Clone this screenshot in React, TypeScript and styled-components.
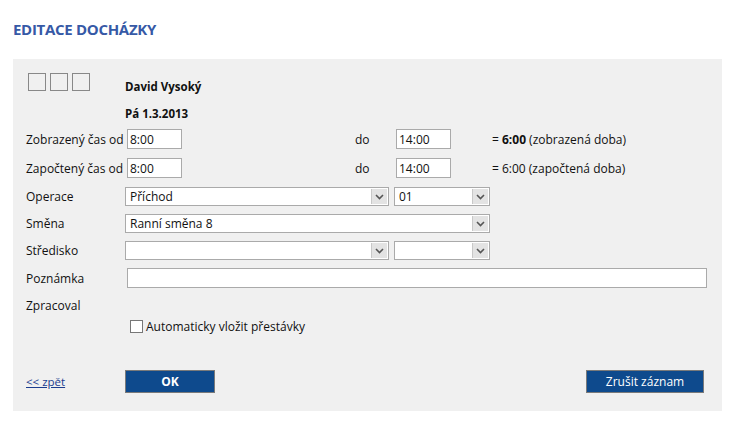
import { createGlobalStyle, styled } from "styled-components";

const GlobalStyle = createGlobalStyle`
  html, body {
    margin: 0;
    padding: 0;
    background: #fff;
  }
  body {
    font-family: "Open Sans", "Noto Sans", Arial, sans-serif;
    font-size: 12px;
    color: #111;
  }
`;

const Page = styled.div`
  padding: 0 15px 0 13px;
`;

const Title = styled.h1`
  margin: 0;
  padding-top: 19px;
  height: 40px;
  font-size: 15px;
  font-weight: 700;
  color: #3659a6;
  letter-spacing: -0.3px;
`;

const Panel = styled.div`
  width: 709px;
  box-sizing: border-box;
  background: #f0f0f0;
  padding: 14px 0 18px 13px;
  display: flex;
  flex-flow: column nowrap;
`;

const Header = styled.div`
  display: flex;
  flex-flow: row nowrap;
`;

const Boxes = styled.div`
  display: flex;
  gap: 4px;
  width: 97px;
  padding-left: 2px;
`;

const Box = styled.div`
  width: 16px;
  height: 16px;
  border: 1px solid #888;
  background: #f0f0f0;
`;

const Person = styled.div`
  display: flex;
  flex-flow: column nowrap;
  gap: 12px;
  padding-top: 6px;
  font-weight: 700;
  font-size: 11.5px;
  line-height: 15px;
`;

const Row = styled.div<{ $top: number; $height?: number }>`
  display: flex;
  flex-flow: row nowrap;
  align-items: center;
  margin-top: ${({ $top }) => $top}px;
  height: ${({ $height }) => $height ?? 20}px;
`;

const Label = styled.div`
  width: 99px;
  flex: none;
  white-space: nowrap;
`;

const TextInput = styled.input<{ $width: number; $flush?: boolean }>`
  box-sizing: border-box;
  width: ${({ $width }) => $width}px;
  height: 20px;
  margin: 0 0 0 ${({ $flush }) => ($flush ? 0 : 2)}px;
  padding: 0 2px;
  border: 1px solid #aaa;
  background: #fff;
  font: inherit;
  color: #111;
  outline: none;
`;

const Between = styled.div<{ $left: number; $width: number }>`
  margin-left: ${({ $left }) => $left}px;
  width: ${({ $width }) => $width}px;
  flex: none;
`;

const Result = styled.div`
  margin-left: 41px;
  white-space: nowrap;

  b {
    font-weight: 700;
  }
`;

const Select = styled.div<{ $width: number }>`
  box-sizing: border-box;
  width: ${({ $width }) => $width}px;
  height: 19px;
  border: 1px solid #aaa;
  background: #fff;
  display: flex;
  flex-flow: row nowrap;
  align-items: stretch;
  flex: none;

  & + & {
    margin-left: 5px;
  }
`;

const SelectValue = styled.div`
  flex: 1;
  padding-left: 4px;
  line-height: 17px;
  white-space: nowrap;
  overflow: hidden;
`;

const Arrow = styled.div`
  width: 15px;
  margin: 1px;
  background: #e3e3e3;
  border-left: 1px solid #c8c8c8;
  display: flex;
  align-items: center;
  justify-content: center;
`;

const CheckRow = styled.label`
  display: flex;
  align-items: center;
  gap: 3px;
  margin-left: 104px;
`;

const CheckBox = styled.span`
  box-sizing: border-box;
  width: 13px;
  height: 13px;
  border: 1px solid #777;
  background: #fff;
`;

const Footer = styled.div`
  display: flex;
  flex-flow: row nowrap;
  align-items: center;
  margin-top: 35px;
  height: 23px;
`;

const BackLink = styled.a`
  width: 99px;
  color: #1b3d8f;
  text-decoration: underline;
  font-size: 11.5px;
`;

const Button = styled.button<{ $width: number }>`
  box-sizing: border-box;
  width: ${({ $width }) => $width}px;
  height: 23px;
  border: 1px solid #7a7a7a;
  background: #0e4a8d;
  color: #fff;
  font: inherit;
  font-weight: 700;
  padding: 0;
`;

const CancelButton = styled(Button)`
  margin-left: auto;
  margin-right: 18px;
  font-weight: 400;
`;

const Chevron = () => (
  <svg width="9" height="6" viewBox="0 0 9 6">
    <path d="M1 1 L4.5 4.5 L8 1" fill="none" stroke="#555" strokeWidth="1.6" />
  </svg>
);

const Dropdown = ({ width, value }: { width: number; value?: string }) => (
  <Select $width={width}>
    <SelectValue>{value}</SelectValue>
    <Arrow>
      <Chevron />
    </Arrow>
  </Select>
);

export default function App() {
  return (
    <Page>
      <GlobalStyle />
      <Title>EDITACE DOCHÁZKY</Title>
      <Panel>
        <Header>
          <Boxes>
            <Box />
            <Box />
            <Box />
          </Boxes>
          <Person>
            <span>David Vysoký</span>
            <span>Pá 1.3.2013</span>
          </Person>
        </Header>

        <Row $top={8}>
          <Label>Zobrazený čas od</Label>
          <TextInput $width={55} defaultValue="8:00" />
          <Between $left={173} $width={41}>do</Between>
          <TextInput $width={55} $flush defaultValue="14:00" />
          <Result>
            = <b>6:00</b> (zobrazená doba)
          </Result>
        </Row>
        <Row $top={9}>
          <Label>Započtený čas od</Label>
          <TextInput $width={55} defaultValue="8:00" />
          <Between $left={173} $width={41}>do</Between>
          <TextInput $width={55} $flush defaultValue="14:00" />
          <Result>= 6:00 (započtená doba)</Result>
        </Row>
        <Row $top={9} $height={19}>
          <Label>Operace</Label>
          <Dropdown width={264} value="Příchod" />
          <Dropdown width={96} value="01" />
        </Row>
        <Row $top={8} $height={19}>
          <Label>Směna</Label>
          <Dropdown width={365} value="Ranní směna 8" />
        </Row>
        <Row $top={8} $height={19}>
          <Label>Středisko</Label>
          <Dropdown width={264} />
          <Dropdown width={96} />
        </Row>
        <Row $top={8}>
          <Label>Poznámka</Label>
          <TextInput $width={580} />
        </Row>
        <Row $top={7}>
          <Label>Zpracoval</Label>
        </Row>
        <Row $top={2} $height={18}>
          <CheckRow>
            <CheckBox />
            Automaticky vložit přestávky
          </CheckRow>
        </Row>
        <Footer>
          <BackLink href="#">&lt;&lt; zpět</BackLink>
          <Button $width={90}>OK</Button>
          <CancelButton $width={118}>Zrušit záznam</CancelButton>
        </Footer>
      </Panel>
    </Page>
  );
}
